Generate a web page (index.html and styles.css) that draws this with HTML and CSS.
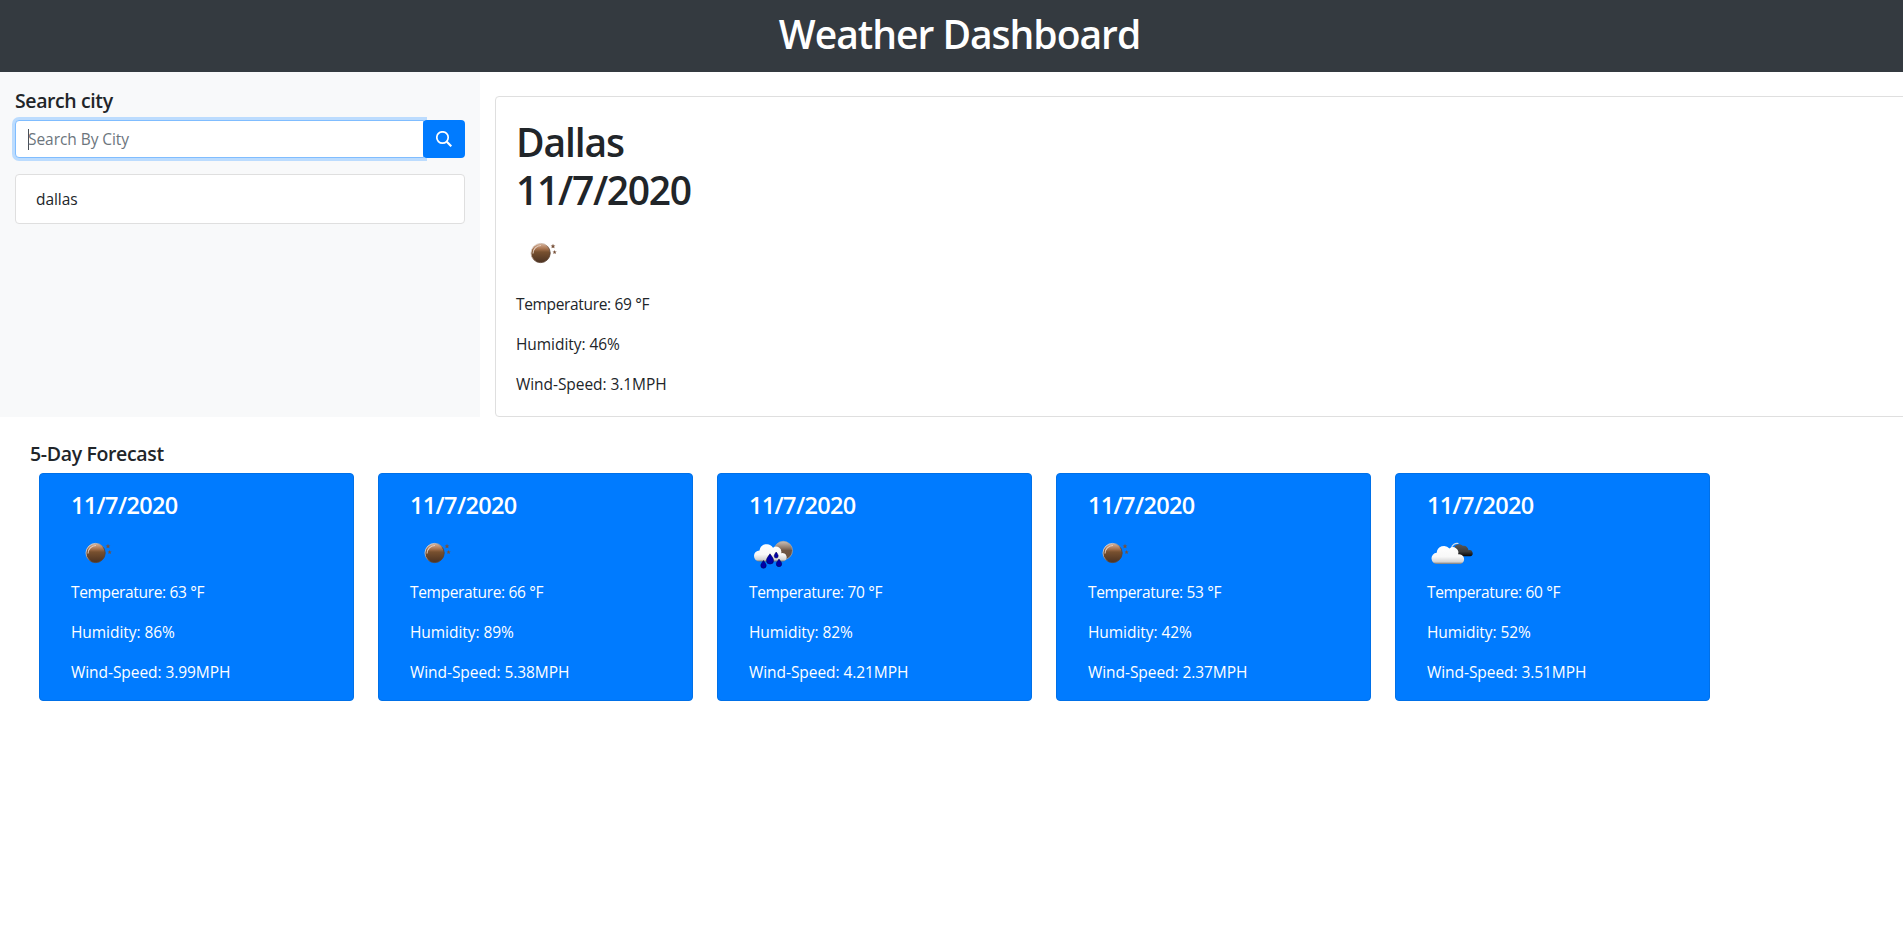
FILE: index.html
```html
<!DOCTYPE html>
<html lang="en">
<head>
<meta charset="utf-8">
<title>Weather Dashboard</title>
<link rel="stylesheet" href="styles.css">
</head>
<body>
<svg class="defs" width="0" height="0" aria-hidden="true">
  <defs>
    <linearGradient id="moonFill" x1="0" y1="0" x2="0" y2="1"><stop offset="0" stop-color="#d9b49b"/><stop offset=".28" stop-color="#a87450"/><stop offset=".45" stop-color="#77502f"/><stop offset="1" stop-color="#4b3222"/></linearGradient>
    <linearGradient id="moonRim" x1="0" y1="0" x2="1" y2="1"><stop offset="0" stop-color="#fff"/><stop offset=".45" stop-color="#a98a76"/><stop offset=".6" stop-color="#5c4231"/></linearGradient>
    <linearGradient id="cloudFill" x1="0" y1="0" x2="0" y2="1"><stop offset="0" stop-color="#fff"/><stop offset=".6" stop-color="#f8f8f8"/><stop offset=".88" stop-color="#d4d4d4"/><stop offset="1" stop-color="#777"/></linearGradient>
    <linearGradient id="darkFill" x1="0" y1="0" x2="0" y2="1"><stop offset="0" stop-color="#585858"/><stop offset=".6" stop-color="#3c3c3c"/><stop offset="1" stop-color="#080808"/></linearGradient>
    <linearGradient id="grayMoon" x1="0" y1="0" x2="0" y2="1"><stop offset="0" stop-color="#cbbfb6"/><stop offset=".35" stop-color="#8f7a6b"/><stop offset=".5" stop-color="#6e5645"/><stop offset="1" stop-color="#67503f"/></linearGradient>
    <symbol id="clear" viewBox="0 0 50 50">
      <circle cx="24.600" cy="25" r="9.600" fill="url(#moonFill)" stroke="url(#moonRim)" stroke-width=".9"/>
      <path d="M17 25.500a8 8 0 0 1 8-8" fill="none" stroke="#e5cfc0" stroke-width="1.100"/>
      <path d="M37 15.800l.7 1.600 1.700.1-1.300 1.100.4 1.700-1.500-.9-1.500.9.4-1.700-1.300-1.100 1.700-.1zM38.600 22.100l.6 1.400 1.500.1-1.200 1 .4 1.500-1.300-.8-1.300.8.4-1.500-1.200-1 1.500-.1z" fill="#78513a"/>
    </symbol>
    <symbol id="rain" viewBox="0 0 50 50">
      <circle cx="34.300" cy="22.500" r="9.200" fill="url(#grayMoon)" stroke="#b5a79c" stroke-width=".7"/>
      <path d="M10.500 33.500a5.500 5.500 0 0 1 0-11A7.300 7.300 0 0 1 24 19.800a5.200 5.200 0 0 1 8.200 5.400 4.300 4.300 0 0 1 2.300 8.300z" fill="url(#cloudFill)"/>
      <path d="M14.500 32.500c1.800 2.600 2.700 3.800 2.700 5.100a2.700 2.700 0 0 1-5.400 0c0-1.300.9-2.500 2.700-5.100zM21 25.800c2.500 3.600 3.600 5 3.600 6.700a3.600 3.600 0 0 1-7.200 0c0-1.700 1.100-3.100 3.600-6.700zM27.200 24c1.500 2.100 2 3 2 4a2 2 0 0 1-4 0c0-1 .5-1.900 2-4zM30 31c1.800 2.600 2.700 3.700 2.700 5a2.700 2.700 0 0 1-5.400 0c0-1.300.9-2.400 2.700-5z" fill="#0000a8" stroke="#050045" stroke-width=".5"/>
    </symbol>
    <symbol id="clouds" viewBox="0 0 50 50">
      <path d="M24.500 20a5.700 5.700 0 0 1 7-4.500" fill="none" stroke="#d7dde3" stroke-width="1.200"/>
      <path d="M27 28.300V20a5.200 5.200 0 0 1 8.700-2.200q4.500-1 5.800 4.500a3.100 3.100 0 0 1 2 6z" fill="url(#darkFill)"/>
      <path d="M10.500 36a5.600 5.600 0 0 1-.8-11.200A7.300 7.300 0 0 1 22.500 20.500a5.400 5.400 0 0 1 8.600 5.800A5 5 0 0 1 33.500 36z" fill="url(#cloudFill)"/>
    </symbol>
  </defs>
</svg>
<header class="top"><h1 class="brand">Weather Dashboard</h1></header>
<main class="main">
  <aside class="side">
    <h5 class="label">Search city</h5>
    <form class="search">
      <div class="field"><span class="caret"></span><span class="placeholder">Search By City</span></div>
      <button class="go" type="button" aria-label="Search"><svg width="16" height="16" viewBox="0 0 16 16" fill="none" stroke="#fff"><circle cx="6.500" cy="6.500" r="5.700" stroke-width="1.700"/><path d="M10.800 10.800l4.500 4.500" stroke-width="2.200"/></svg></button>
    </form>
    <div class="history">dallas</div>
  </aside>
  <section class="current">
    <h1 class="place">Dallas<br><span class="date">11/7/2020</span></h1>
    <svg class="icon"><use href="#clear"/></svg>
    <p class="temp">Temperature: 69 °F</p><p>Humidity: 46%</p><p>Wind-Speed: 3.1MPH</p>
  </section>
</main>
<section class="forecast">
  <h5 class="days-title">5-Day Forecast</h5>
  <div class="days">
    <article class="day"><h4>11/7/2020</h4><svg class="icon"><use href="#clear"/></svg><p class="temp">Temperature: 63 °F</p><p>Humidity: 86%</p><p>Wind-Speed: 3.99MPH</p></article>
    <article class="day"><h4>11/7/2020</h4><svg class="icon"><use href="#clear"/></svg><p class="temp">Temperature: 66 °F</p><p>Humidity: 89%</p><p>Wind-Speed: 5.38MPH</p></article>
    <article class="day"><h4>11/7/2020</h4><svg class="icon"><use href="#rain"/></svg><p class="temp">Temperature: 70 °F</p><p>Humidity: 82%</p><p>Wind-Speed: 4.21MPH</p></article>
    <article class="day"><h4>11/7/2020</h4><svg class="icon"><use href="#clear"/></svg><p class="temp">Temperature: 53 °F</p><p>Humidity: 42%</p><p>Wind-Speed: 2.37MPH</p></article>
    <article class="day"><h4>11/7/2020</h4><svg class="icon"><use href="#clouds"/></svg><p class="temp">Temperature: 60 °F</p><p>Humidity: 52%</p><p>Wind-Speed: 3.51MPH</p></article>
  </div>
</section>
</body>
</html>
```
FILE: styles.css
```css
* { box-sizing: border-box; }
body { margin: 0; background: #fff; color: #212529; font: 400 15.500px/24px "Open Sans", "Noto Sans", sans-serif; letter-spacing: -.06px; overflow: hidden; }
h1, h4, h5, p { margin: 0; font-weight: 600; }
p { font-weight: 400; }
.defs { display: block; }
.top { height: 72px; padding: 10px 0 0 16px; background: #343a40; color: #fff; text-align: center; }
.brand { font-size: 39px; line-height: 48px; letter-spacing: -1px; }
.main { display: flex; height: 345px; }
.side { flex: 0 0 480px; padding: 17px 15px 16px; background: #f8f9fa; }
.label { font-size: 19.500px; line-height: 24px; letter-spacing: -.4px; margin-bottom: 7px; }
.search { display: flex; height: 38px; }
.field { flex: 1; display: flex; align-items: center; padding: 0 12px; background: #fff; border: 1px solid #80bdff; border-radius: 4px 0 0 4px; box-shadow: 0 0 0 3px #bcdcfe; }
.caret { width: 1px; height: 21px; margin-right: -1px; background: #495057; }
.placeholder { color: #6c757d; }
.go { position: relative; width: 42px; margin-left: -1px; padding: 0; border: 0; border-radius: 4px; background: #007bff; }
.go svg { display: block; margin: -1px auto 0; }
.history { margin-top: 16px; height: 50px; padding: 12px 20px; background: #fff; border: 1px solid #dfdfdf; border-radius: 4px; }
.current { flex: 0 0 1440px; margin: 24px 0 0 15px; padding: 21px 20px 20px; border: 1px solid #dfdfdf; border-radius: 4px; }
.place { font-size: 39px; line-height: 48px; letter-spacing: -1.100px; }
.date { letter-spacing: -1.300px; }
.icon { display: block; width: 50px; height: 50px; }
.current .icon { margin: 14px 0; }
.temp { letter-spacing: -.34px; }
p + p { margin-top: 16px; }
.forecast { padding: 25px 0 0 30px; }
.days-title { font-size: 19.500px; line-height: 24px; letter-spacing: -.35px; }
.days { display: flex; gap: 24px; margin: 7px 0 0 9px; }
.day { width: 315px; height: 228px; padding: 17px 31px; background: #007bff; color: #fff; border: 1px solid #0070e8; border-radius: 4px; }
.day h4 { font-size: 23.500px; line-height: 29px; letter-spacing: -.65px; }
.day .icon { margin: 8px 0 2px; }
```
